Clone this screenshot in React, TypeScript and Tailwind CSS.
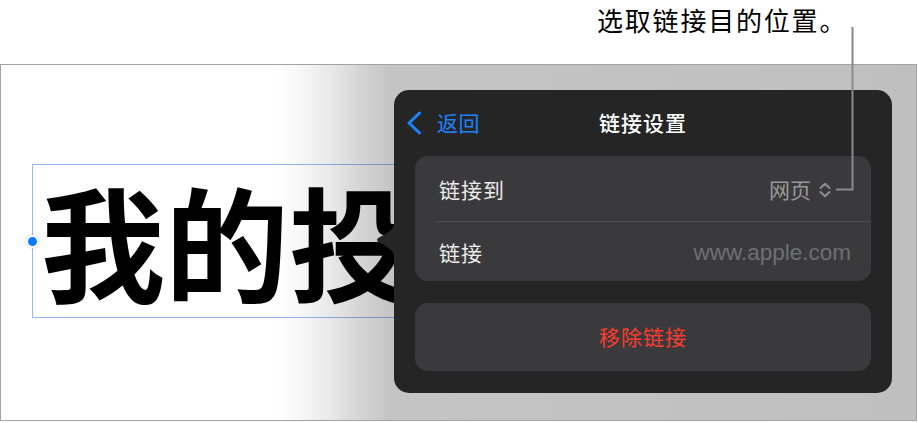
import React from 'react';

const cjk = '"Noto Sans CJK SC", "Noto Sans", sans-serif';

function BackChevron() {
  return (
    <svg width="16" height="24" viewBox="0 0 16 24" fill="none" stroke="#1a84ff" strokeWidth="3" strokeLinecap="round" strokeLinejoin="round">
      <path d="M13.5 2 L3 12 L13.5 22" />
    </svg>
  );
}

function UpDown() {
  return (
    <svg width="14" height="16" viewBox="0 0 14 16" fill="none" stroke="#8e8e93" strokeWidth="2" strokeLinecap="round" strokeLinejoin="round">
      <path d="M2.5 6 L7 1.8 L11.5 6" />
      <path d="M2.5 10 L7 14.2 L11.5 10" />
    </svg>
  );
}

export default function App() {
  return (
    <div className="relative w-[918px] h-[423px] bg-white overflow-hidden" style={{ fontFamily: cjk }}>
      {/* callout */}
      <div className="h-[64px] pl-[597px] pt-[2px] text-[26px] leading-[36px] tracking-[1.8px] text-black">
        选取链接目的位置。
      </div>

      {/* slide frame */}
      <div className="relative h-[357px] w-[917px] border border-[#a3a3a3]">
        <div className="pl-[31px] pt-[99px]">
          <div className="relative flex h-[154px] w-[520px] items-center border border-[#93b9f6] pl-[8px] pb-[4px]">
            <span className="text-[124px] font-bold leading-none text-black whitespace-nowrap">我的投</span>
            <span className="absolute left-[-7px] top-[70px] h-[13px] w-[13px] rounded-full border-2 border-white bg-[#0a7aff] shadow-[0_0_2px_rgba(0,0,0,0.3)]" />
          </div>
        </div>

        {/* popover shadow */}
        <div className="absolute inset-0 bg-[linear-gradient(to_right,rgba(0,0,0,0)_275px,rgba(0,0,0,0.03)_300px,rgba(0,0,0,0.09)_330px,rgba(0,0,0,0.17)_360px,rgba(0,0,0,0.23)_390px,rgba(0,0,0,0.25)_917px)]" />

        {/* popover */}
        <div className="absolute left-[393px] top-[25px] w-[498px] h-[303px] rounded-[15px] bg-[#252525] px-[21px]">
          <svg className="absolute left-[-18px] top-[130px]" width="19" height="40" viewBox="0 0 19 40">
            <path d="M19 0 C19 8 14 12 4 17 C0 19 0 21 4 23 C14 28 19 32 19 40 Z" fill="#252525" />
          </svg>

          <div className="grid h-[66px] grid-cols-[1fr_auto_1fr] items-center">
            <div className="flex items-center gap-[15px] ml-[-9px]">
              <BackChevron />
              <span className="text-[21px] text-[#1a84ff] tracking-[0.5px]">返回</span>
            </div>
            <div className="text-[21px] font-medium text-white tracking-[1px]">链接设置</div>
            <div />
          </div>

          <div className="rounded-[13px] bg-[#3a3a3c]">
            <div className="flex h-[65px] items-center justify-between pl-[24px] pr-[39px] pt-[3px]">
              <span className="text-[21px] text-[#ececec] tracking-[1px]">链接到</span>
              <span className="flex items-center gap-[7px]">
                <span className="text-[21px] text-[#98989d]">网页</span>
                <UpDown />
              </span>
            </div>
            <div className="ml-[21px] h-px bg-[#4f4f52]" />
            <div className="flex h-[59px] items-center justify-between pl-[24px] pr-[20px] pt-[2px]">
              <span className="text-[21px] text-[#ececec] tracking-[1px]">链接</span>
              <span className="text-[22.5px] text-[#6f6f73]" style={{ fontFamily: '"Liberation Sans", Arial, sans-serif' }}>
                www.apple.com
              </span>
            </div>
          </div>

          <div className="mt-[22px] flex h-[68px] items-center justify-center rounded-[13px] bg-[#3a3a3c]">
            <span className="text-[21px] text-[#ff3b30] tracking-[1px]">移除链接</span>
          </div>
        </div>
      </div>

      {/* callout leader line */}
      <svg className="absolute left-[834px] top-[26px]" width="22" height="166" viewBox="0 0 22 166" fill="none" stroke="#8a8a8a" strokeWidth="2">
        <path d="M18.5 1 V163.5 H2" />
      </svg>
    </div>
  );
}
